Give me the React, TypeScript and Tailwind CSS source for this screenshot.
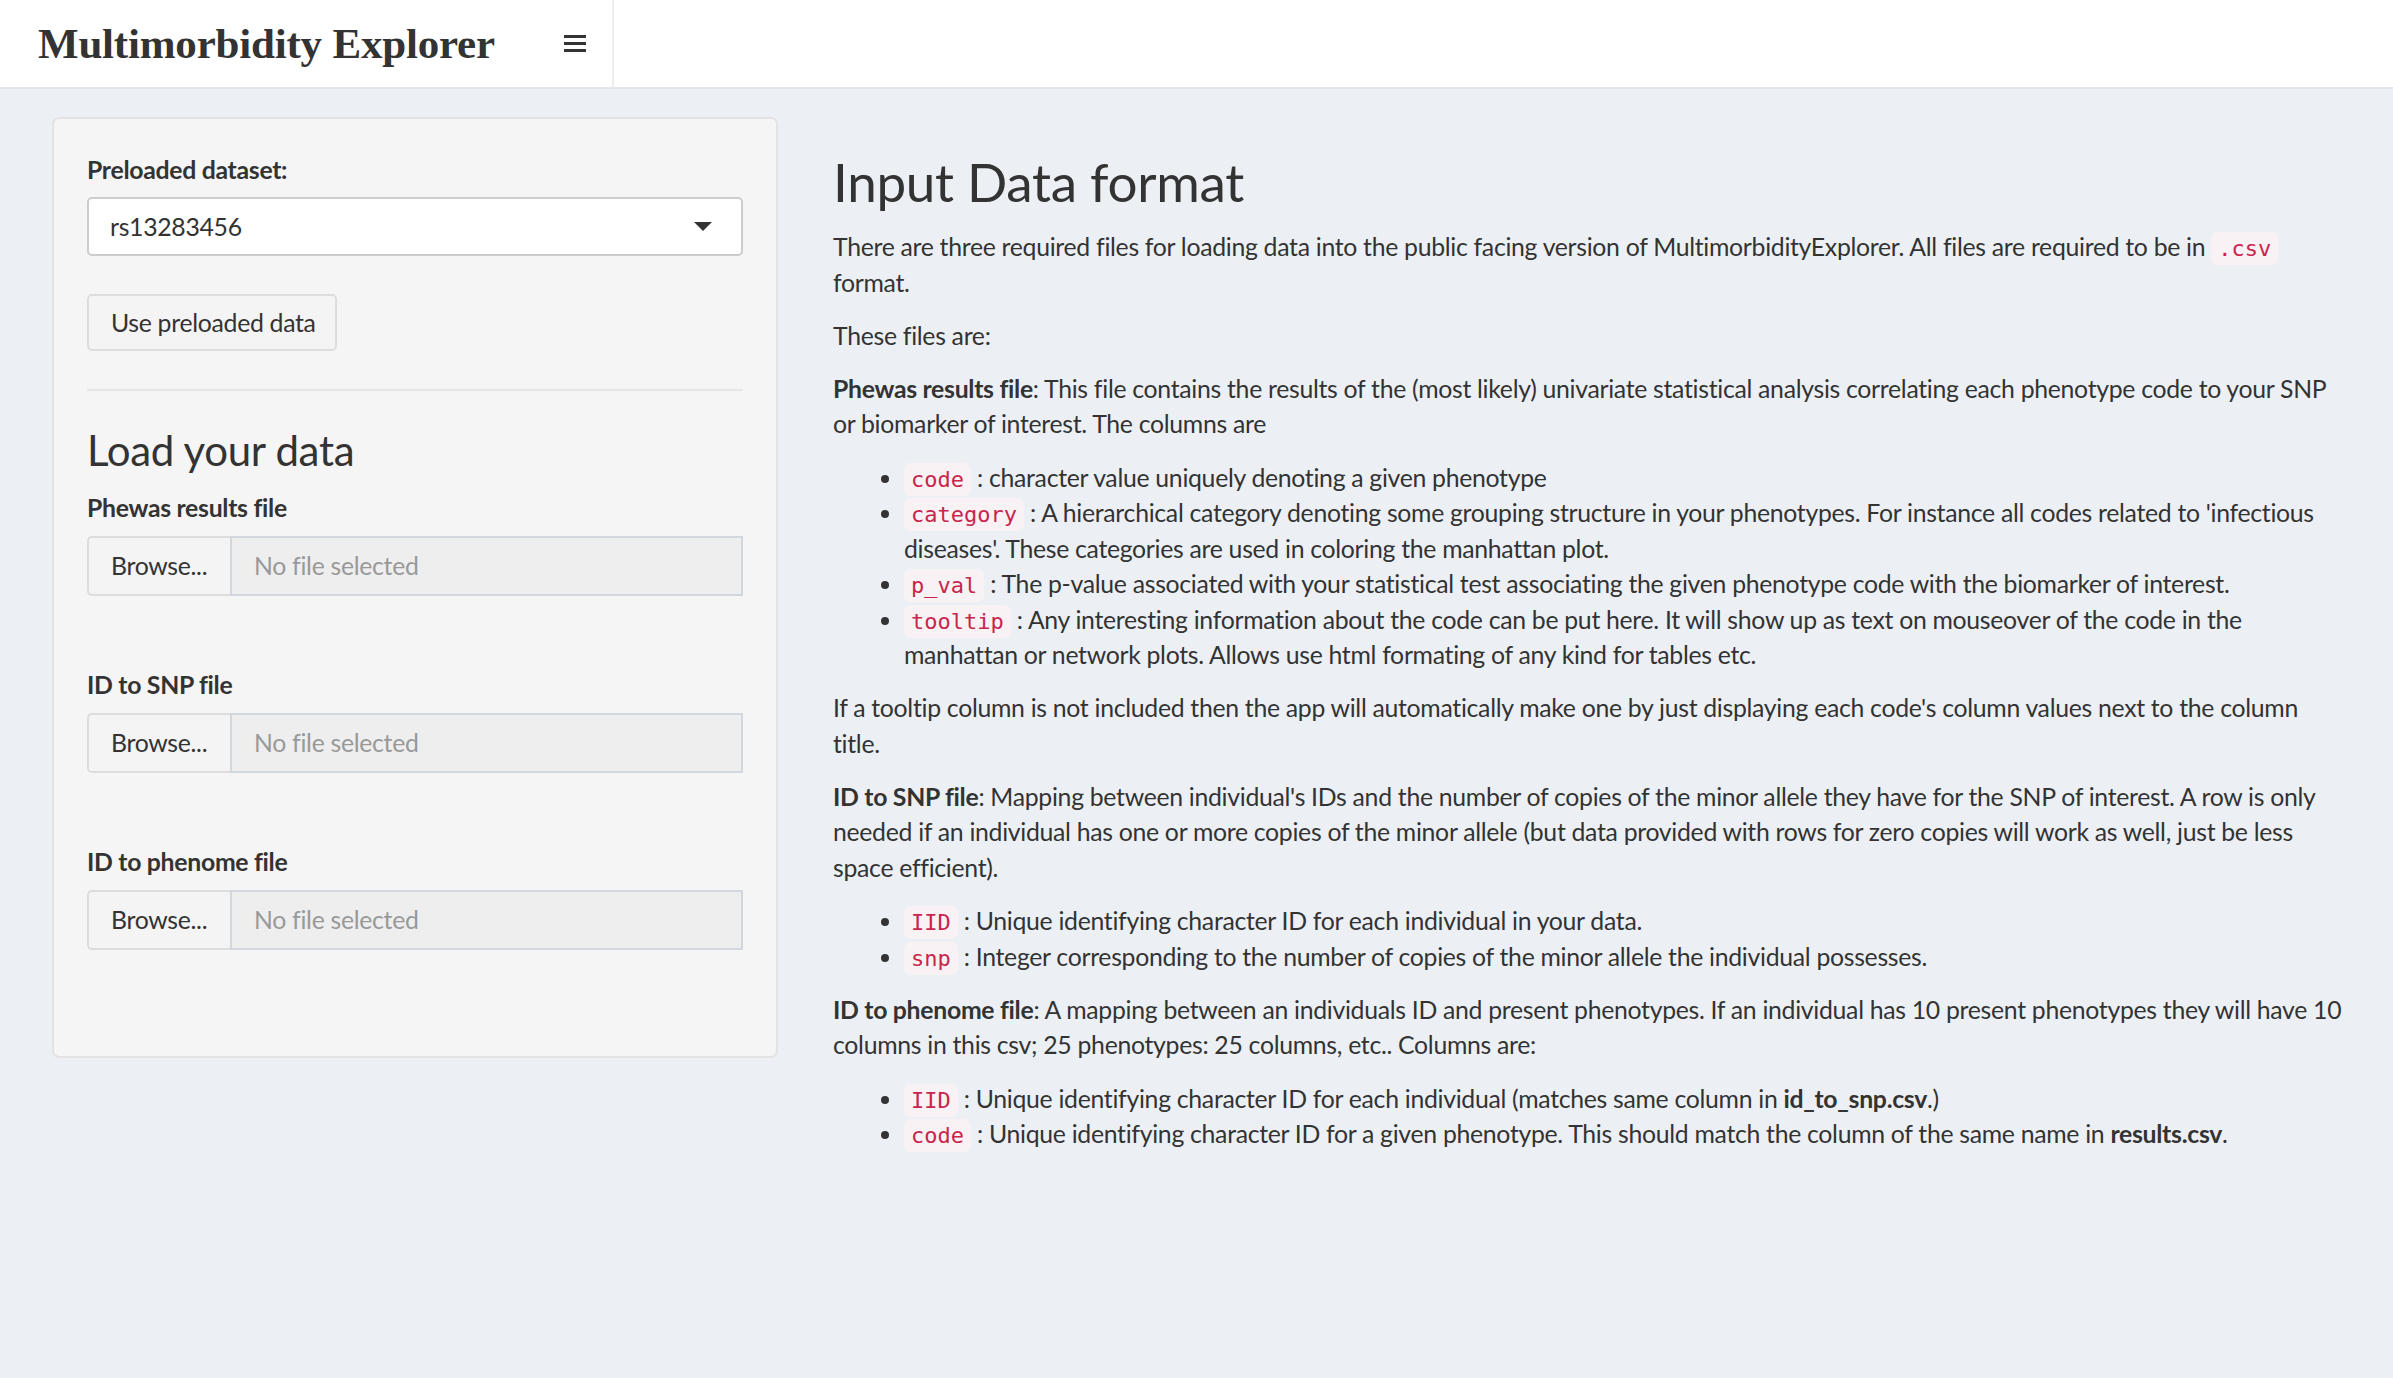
import React from 'react';

const Code: React.FC<{ children: React.ReactNode }> = ({ children }) => (
  <code className="font-['DejaVu_Sans_Mono',monospace] text-[22px] leading-none tracking-normal text-[#c7254e] bg-[#f9f2f4] px-[7px] py-[4px] rounded-[7px]">
    {children}
  </code>
);

const FileRow: React.FC<{ label: string; first?: boolean }> = ({ label, first }) => (
  <div className={first ? 'mt-[17px]' : 'mt-[71px]'}>
    <label className="block font-bold leading-[36px]">{label}</label>
    <div className="mt-[10px] flex h-[60px]">
      <div className="w-[143px] flex items-center pl-[22px] bg-[#f4f4f4] border-2 border-r-0 border-[#dddddd] rounded-l-[5px] text-[#333]">
        Browse...
      </div>
      <div className="flex-1 flex items-center pl-[22px] bg-[#eeeeee] border-2 border-[#d2d6de] text-[#999]">
        No file selected
      </div>
    </div>
  </div>
);

export default function App() {
  return (
    <div className="min-h-screen bg-[#ecf0f5] text-[#333] font-['Lato',sans-serif] text-[24.8px] leading-[35.5px] tracking-[-0.3px]">
      <header className="h-[89px] bg-white border-b-2 border-[#e3e6ec] flex">
        <div className="w-[612px] flex items-center pl-[38px] pr-[26px]">
          <span className="font-['Liberation_Serif',serif] font-bold text-[43px] leading-none text-[#333] tracking-[-0.2px]">
            Multimorbidity Explorer
          </span>
          <div className="ml-auto flex flex-col gap-[4px] w-[22px]">
            <span className="block h-[3px] bg-[#333]" />
            <span className="block h-[3px] bg-[#333]" />
            <span className="block h-[3px] bg-[#333]" />
          </div>
        </div>
        <div className="w-[2px] bg-[#eeeeee]" />
      </header>

      <main className="flex items-start pl-[52px] pt-[28px]">
        <div className="w-[726px] shrink-0 bg-[#f5f5f5] border-2 border-[#e3e3e3] rounded-[7px] px-[33px] pt-[33px] pb-[106px]">
          <label className="block font-bold leading-[36px]">Preloaded dataset:</label>
          <div className="mt-[9px] h-[59px] bg-white border-2 border-[#cccccc] rounded-[5px] flex items-center pl-[21px] pr-[29px]">
            <span>rs13283456</span>
            <svg className="ml-auto" width="18" height="9" viewBox="0 0 18 9">
              <path d="M0 0 L18 0 L9 9 Z" fill="#333" />
            </svg>
          </div>
          <button className="mt-[38px] h-[57px] w-[250px] text-left pl-[22px] bg-[#f4f4f4] border-2 border-[#dddddd] rounded-[5px] text-[#333]">
            Use preloaded data
          </button>
          <hr className="mt-[38px] border-0 h-[2px] bg-[#e6e6e6]" />
          <h3 className="mt-[36px] text-[42px] leading-[46px] font-normal">Load your data</h3>
          <FileRow label="Phewas results file" first />
          <FileRow label="ID to SNP file" />
          <FileRow label="ID to phenome file" />
        </div>

        <div className="ml-[55px] w-[1515px]">
          <h2 className="mt-[36px] mb-[18px] text-[53px] leading-[58px] font-normal">Input Data format</h2>
          <p className="mb-[17.7px]">
            There are three required files for loading data into the public facing version of MultimorbidityExplorer. All files are required to be in <Code>.csv</Code> format.
          </p>
          <p className="mb-[17.7px]">These files are:</p>
          <p className="mb-[17.7px]">
            <b className="font-bold">Phewas results file</b>: This file contains the results of the (most likely) univariate statistical analysis correlating each phenotype code to your SNP or biomarker of interest. The columns are
          </p>
          <ul className="list-disc pl-[71px] mb-[17.7px]">
            <li><Code>code</Code> : character value uniquely denoting a given phenotype</li>
            <li><Code>category</Code> : A hierarchical category denoting some grouping structure in your phenotypes. For instance all codes related to 'infectious diseases'. These categories are used in coloring the manhattan plot.</li>
            <li><Code>p_val</Code> : The p-value associated with your statistical test associating the given phenotype code with the biomarker of interest.</li>
            <li><Code>tooltip</Code> : Any interesting information about the code can be put here. It will show up as text on mouseover of the code in the manhattan or network plots. Allows use html formating of any kind for tables etc.</li>
          </ul>
          <p className="mb-[17.7px]">
            If a tooltip column is not included then the app will automatically make one by just displaying each code's column values next to the column title.
          </p>
          <p className="mb-[17.7px]">
            <b className="font-bold">ID to SNP file</b>: Mapping between individual's IDs and the number of copies of the minor allele they have for the SNP of interest. A row is only needed if an individual has one or more copies of the minor allele (but data provided with rows for zero copies will work as well, just be less space efficient).
          </p>
          <ul className="list-disc pl-[71px] mb-[17.7px]">
            <li><Code>IID</Code> : Unique identifying character ID for each individual in your data.</li>
            <li><Code>snp</Code> : Integer corresponding to the number of copies of the minor allele the individual possesses.</li>
          </ul>
          <p className="mb-[17.7px]">
            <b className="font-bold">ID to phenome file</b>: A mapping between an individuals ID and present phenotypes. If an individual has 10 present phenotypes they will have 10 columns in this csv; 25 phenotypes: 25 columns, etc.. Columns are:
          </p>
          <ul className="list-disc pl-[71px] mb-[17.7px]">
            <li><Code>IID</Code> : Unique identifying character ID for each individual (matches same column in <b className="font-bold">id_to_snp.csv</b>.)</li>
            <li><Code>code</Code> : Unique identifying character ID for a given phenotype. This should match the column of the same name in <b className="font-bold">results.csv</b>.</li>
          </ul>
        </div>
      </main>
    </div>
  );
}
